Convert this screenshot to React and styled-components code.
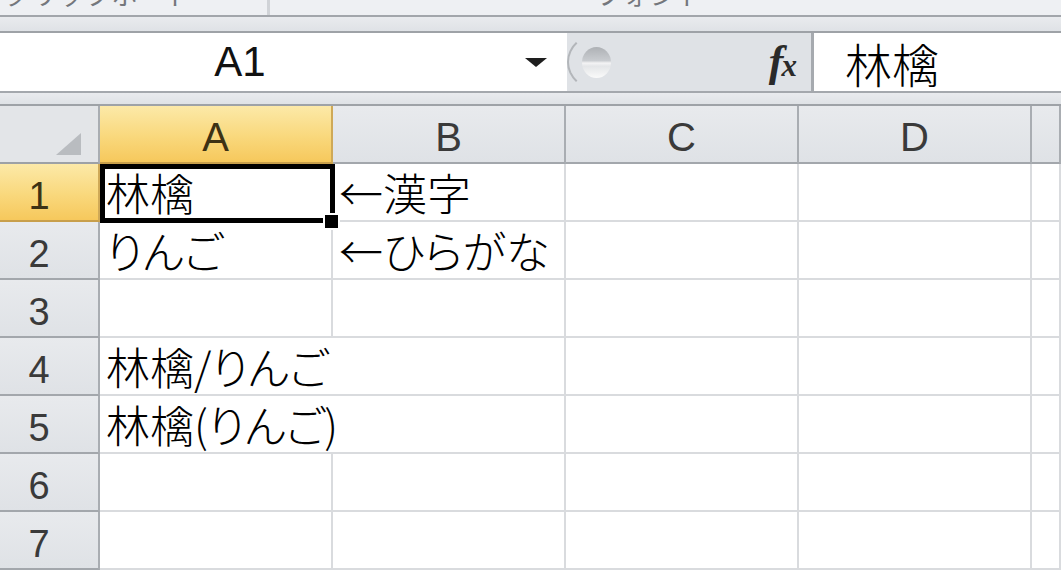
import styled, { createGlobalStyle } from 'styled-components'

const GlobalStyle = createGlobalStyle`
  *, *::before, *::after { box-sizing: border-box; }
  html, body {
    margin: 0;
    padding: 0;
    background: #fff;
    overflow: hidden;
  }
  body {
    font-family: "Liberation Sans", "Noto Sans CJK JP", sans-serif;
  }
`

const Window = styled.div`
  width: 1061px;
  height: 575px;
  display: flex;
  flex-direction: column;
  overflow: hidden;
`

const RibbonStrip = styled.div`
  height: 17px;
  flex-shrink: 0;
  display: flex;
  background: #eef0f3;
  border-bottom: 2px solid #a2a6ab;
  overflow: hidden;
`

const RibbonGroup = styled.div`
  width: ${p => p.$width}px;
  flex-shrink: 0;
  display: flex;
  align-items: flex-end;
  padding-left: ${p => p.$pad}px;
  border-right: ${p => p.$divider ? '3px solid #d0d3d7' : 'none'};
  overflow: hidden;
`

const GroupLabel = styled.span`
  font-family: "Noto Sans CJK JP", sans-serif;
  font-size: 26px;
  line-height: 26px;
  margin-bottom: 8px;
  color: #74777c;
  letter-spacing: 1px;
`

const Band = styled.div`
  height: ${p => p.$h}px;
  flex-shrink: 0;
  background: linear-gradient(#e9ebee, #dfe2e6);
  border-top: ${p => p.$top ? '2px solid #a4a8ad' : 'none'};
  border-bottom: 2px solid #9ea2a7;
`

const FormulaBar = styled.div`
  height: 58px;
  flex-shrink: 0;
  display: flex;
  background: #dfe2e6;
`

const NameBox = styled.div`
  width: 567px;
  display: flex;
  align-items: center;
  background: #fff;
`

const NameText = styled.span`
  width: 480px;
  text-align: center;
  font-size: 42px;
  color: #111;
`

const DropArrow = styled.span`
  margin-left: 45px;
  width: 0;
  height: 0;
  border-left: 11px solid transparent;
  border-right: 11px solid transparent;
  border-top: 9px solid #1e1e1e;
`

const KnobArea = styled.div`
  width: 244px;
  flex-shrink: 0;
  display: flex;
  align-items: center;
  padding-right: 16px;
`

const Knob = styled.div`
  width: 64px;
  height: 58px;
  display: flex;
  align-items: center;
  padding-left: 13px;
  border: 2px solid transparent;
  border-left-color: #b3b6ba;
  border-radius: 50%;
`

const KnobBall = styled.span`
  width: 29px;
  height: 31px;
  border-radius: 50%;
  background: linear-gradient(#aeb1b5 0%, #c9ccd0 44%, #f4f4f5 52%, #e4e6e8 62%, #fafafa 100%);
`

const FxLabel = styled.span`
  margin-left: auto;
  font-family: "Liberation Serif", serif;
  font-style: italic;
  font-weight: bold;
  color: #2a2a2a;
  font-size: 44px;
  line-height: 1;
  letter-spacing: -2px;
  & > small {
    font-size: 31px;
  }
`

const FormulaInput = styled.div`
  flex: 1;
  display: flex;
  align-items: center;
  padding-left: 31px;
  background: #fff;
  border-left: 3px solid #a6aaaf;
  font-family: "Noto Sans CJK JP", sans-serif;
  font-weight: 300;
  font-size: 47px;
  color: #000;
`

const Sheet = styled.div`
  flex: 1;
  display: grid;
  grid-template-columns: 100px repeat(4, 233px) 1fr;
  grid-auto-rows: 58px;
`

const Corner = styled.div`
  display: flex;
  align-items: flex-end;
  justify-content: flex-end;
  padding: 0 17px 7px 0;
  background: #e3e5e8;
  border-right: 2px solid #a9adb2;
  border-bottom: 2px solid #9da1a6;

  &::after {
    content: '';
    border-left: 25px solid transparent;
    border-bottom: 22px solid #b9bcc0;
  }
`

const HeadCell = styled.div`
  display: flex;
  align-items: center;
  justify-content: center;
  padding-top: ${p => p.$row ? 8 : 6}px;
  padding-right: ${p => p.$row ? 20 : 0}px;
  font-size: ${p => p.$row ? 38 : 40}px;
  color: ${p => p.$active ? '#3d3214' : '#3a3a3a'};
  background: ${p => p.$active
    ? 'linear-gradient(#fce9a8, #f9d87c 55%, #f6c85c)'
    : 'linear-gradient(#e8eaed, #dfe2e6)'};
  border-right: 2px solid ${p => p.$active ? '#cfa957' : '#a9adb2'};
  border-bottom: 2px solid ${p => p.$active ? '#c89f4b' : '#a3a7ac'};
`

const Cell = styled.div`
  grid-column: span ${p => p.$span || 1};
  position: relative;
  z-index: ${p => p.$selected ? 2 : 'auto'};
  display: flex;
  align-items: center;
  padding-left: 6px;
  white-space: nowrap;
  font-family: "Noto Sans CJK JP", sans-serif;
  font-weight: 300;
  font-feature-settings: "palt";
  font-size: 44px;
  line-height: 56px;
  color: #000;
  background: #fff;
  border-right: 2px solid #d9dbde;
  border-bottom: 2px solid #d9dbde;

  ${p => p.$selected && `
    &::before {
      content: '';
      position: absolute;
      left: 0;
      top: 0;
      right: -4px;
      bottom: -3px;
      border: 5px solid #000;
    }
    &::after {
      content: '';
      position: absolute;
      right: -9px;
      bottom: -10px;
      width: 17px;
      height: 17px;
      background: #000;
      border: 2px solid #fff;
    }
  `}
`

const columns = ['A', 'B', 'C', 'D', '']

const rows = [
  [{ text: '林檎', selected: true }, { text: '←漢字' }, {}, {}, {}],
  [{ text: 'りんご' }, { text: '←ひらがな' }, {}, {}, {}],
  [{}, {}, {}, {}, {}],
  [{ text: '林檎/りんご', span: 2 }, {}, {}, {}],
  [{ text: '林檎(りんご)', span: 2 }, {}, {}, {}],
  [{}, {}, {}, {}, {}],
  [{}, {}, {}, {}, {}],
]

function RowGroup({ index, cells }) {
  return (
    <>
      <HeadCell $row $active={index === 0}>{index + 1}</HeadCell>
      {cells.map((cell, i) => (
        <Cell key={i} $span={cell.span} $selected={cell.selected}>
          {cell.text}
        </Cell>
      ))}
    </>
  )
}

export default function App() {
  return (
    <>
      <GlobalStyle />
      <Window>
        <RibbonStrip>
          <RibbonGroup $width={270} $pad={4} $divider>
            <GroupLabel>クリップボード</GroupLabel>
          </RibbonGroup>
          <RibbonGroup $width={791} $pad={326}>
            <GroupLabel>フォント</GroupLabel>
          </RibbonGroup>
        </RibbonStrip>
        <Band $h={16} />
        <FormulaBar>
          <NameBox>
            <NameText>A1</NameText>
            <DropArrow />
          </NameBox>
          <KnobArea>
            <Knob>
              <KnobBall />
            </Knob>
            <FxLabel>f<small>x</small></FxLabel>
          </KnobArea>
          <FormulaInput>林檎</FormulaInput>
        </FormulaBar>
        <Band $h={15} $top />
        <Sheet>
          <Corner />
          {columns.map((c, i) => (
            <HeadCell key={'h' + i} $active={c === 'A'}>{c}</HeadCell>
          ))}
          {rows.map((cells, r) => (
            <RowGroup key={r} index={r} cells={cells} />
          ))}
        </Sheet>
      </Window>
    </>
  )
}
